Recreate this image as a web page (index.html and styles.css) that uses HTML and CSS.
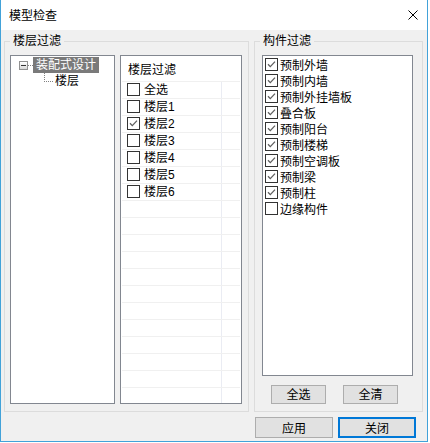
FILE: index.html
```html
<!DOCTYPE html>
<html lang="zh-CN">
<head>
    <meta charset="UTF-8">
    <title>模型检查</title>
    <link rel="stylesheet" href="styles.css">
</head>
<body>
    <div class="window">
        <div class="titlebar">
            <span class="title">模型检查</span>
            <svg class="close" width="10" height="10" viewBox="0 0 10 10">
                <path d="M0.5 0.5 L9.5 9.5 M9.5 0.5 L0.5 9.5" stroke="#000" stroke-width="1" fill="none"/>
            </svg>
        </div>

        <div class="body">
            <div class="groups">
                <fieldset class="group group-floor">
                    <legend>楼层过滤</legend>
                    <div class="group-inner">
                        <div class="tree">
                            <div class="tree-row">
                                <span class="expander"></span>
                                <span class="dots-h"></span>
                                <span class="tree-label selected">装配式设计</span>
                            </div>
                            <div class="tree-row child">
                                <span class="connector"></span>
                                <span class="tree-label">楼层</span>
                            </div>
                        </div>

                        <div class="floor-list">
                            <div class="list-header">楼层过滤</div>
                            <div class="grid-row"><div class="grid-cell"><span class="check"></span>全选</div></div>
                            <div class="grid-row"><div class="grid-cell"><span class="check"></span>楼层1</div></div>
                            <div class="grid-row"><div class="grid-cell"><span class="check"><svg width="11" height="11" viewBox="0 0 11 11"><path d="M2 5.2 L4.3 7.6 L9 2.6" fill="none" stroke="#5f5f5f" stroke-width="1.3"/></svg></span>楼层2</div></div>
                            <div class="grid-row"><div class="grid-cell"><span class="check"></span>楼层3</div></div>
                            <div class="grid-row"><div class="grid-cell"><span class="check"></span>楼层4</div></div>
                            <div class="grid-row"><div class="grid-cell"><span class="check"></span>楼层5</div></div>
                            <div class="grid-row"><div class="grid-cell"><span class="check"></span>楼层6</div></div>
                            <div class="grid-row"><div class="grid-cell"></div></div>
                            <div class="grid-row"><div class="grid-cell"></div></div>
                            <div class="grid-row"><div class="grid-cell"></div></div>
                            <div class="grid-row"><div class="grid-cell"></div></div>
                            <div class="grid-row"><div class="grid-cell"></div></div>
                            <div class="grid-row"><div class="grid-cell"></div></div>
                            <div class="grid-row"><div class="grid-cell"></div></div>
                            <div class="grid-row"><div class="grid-cell"></div></div>
                            <div class="grid-row"><div class="grid-cell"></div></div>
                            <div class="grid-row"><div class="grid-cell"></div></div>
                            <div class="grid-row"><div class="grid-cell"></div></div>
                            <div class="grid-row"><div class="grid-cell"></div></div>
                        </div>
                    </div>
                </fieldset>

                <fieldset class="group group-part">
                    <legend>构件过滤</legend>
                    <div class="group-inner column">
                        <div class="part-list">
                            <div class="part-item"><span class="check"><svg width="11" height="11" viewBox="0 0 11 11"><path d="M2 5.2 L4.3 7.6 L9 2.6" fill="none" stroke="#5f5f5f" stroke-width="1.3"/></svg></span>预制外墙</div>
                            <div class="part-item"><span class="check"><svg width="11" height="11" viewBox="0 0 11 11"><path d="M2 5.2 L4.3 7.6 L9 2.6" fill="none" stroke="#5f5f5f" stroke-width="1.3"/></svg></span>预制内墙</div>
                            <div class="part-item"><span class="check"><svg width="11" height="11" viewBox="0 0 11 11"><path d="M2 5.2 L4.3 7.6 L9 2.6" fill="none" stroke="#5f5f5f" stroke-width="1.3"/></svg></span>预制外挂墙板</div>
                            <div class="part-item"><span class="check"><svg width="11" height="11" viewBox="0 0 11 11"><path d="M2 5.2 L4.3 7.6 L9 2.6" fill="none" stroke="#5f5f5f" stroke-width="1.3"/></svg></span>叠合板</div>
                            <div class="part-item"><span class="check"><svg width="11" height="11" viewBox="0 0 11 11"><path d="M2 5.2 L4.3 7.6 L9 2.6" fill="none" stroke="#5f5f5f" stroke-width="1.3"/></svg></span>预制阳台</div>
                            <div class="part-item"><span class="check"><svg width="11" height="11" viewBox="0 0 11 11"><path d="M2 5.2 L4.3 7.6 L9 2.6" fill="none" stroke="#5f5f5f" stroke-width="1.3"/></svg></span>预制楼梯</div>
                            <div class="part-item"><span class="check"><svg width="11" height="11" viewBox="0 0 11 11"><path d="M2 5.2 L4.3 7.6 L9 2.6" fill="none" stroke="#5f5f5f" stroke-width="1.3"/></svg></span>预制空调板</div>
                            <div class="part-item"><span class="check"><svg width="11" height="11" viewBox="0 0 11 11"><path d="M2 5.2 L4.3 7.6 L9 2.6" fill="none" stroke="#5f5f5f" stroke-width="1.3"/></svg></span>预制梁</div>
                            <div class="part-item"><span class="check"><svg width="11" height="11" viewBox="0 0 11 11"><path d="M2 5.2 L4.3 7.6 L9 2.6" fill="none" stroke="#5f5f5f" stroke-width="1.3"/></svg></span>预制柱</div>
                            <div class="part-item"><span class="check"></span>边缘构件</div>
                        </div>
                        <div class="part-buttons">
                            <button class="btn btn-small">全选</button>
                            <button class="btn btn-small">全清</button>
                        </div>
                    </div>
                </fieldset>
            </div>

            <div class="footer-buttons">
                <button class="btn btn-dialog">应用</button>
                <button class="btn btn-dialog btn-default">关闭</button>
            </div>
        </div>
    </div>
</body>
</html>
```

FILE: styles.css
```css
* {
    margin: 0;
    padding: 0;
    box-sizing: border-box;
}

body {
    background: #ffffff;
    font-family: "Liberation Sans", "Noto Sans CJK SC", sans-serif;
    font-size: 12px;
    line-height: 16px;
    color: #000;
}

.window {
    width: 428px;
    height: 442px;
    border: 1px solid #42a2d9;
    border-top: none;
    display: flex;
    flex-direction: column;
}

.titlebar {
    height: 30px;
    background: #ffffff;
    display: flex;
    align-items: center;
    justify-content: space-between;
    padding: 0 9px 0 8px;
}

.title {
    font-size: 12px;
    padding-top: 2px;
}

.close {
    display: block;
}

.body {
    flex: 1;
    background: #f0f0f0;
    padding: 4px 0 0 3px;
}

.groups {
    display: flex;
    gap: 5px;
}

.group {
    border: 1px solid #dcdcdc;
    padding: 7px 6px 7px 5px;
    min-width: 0;
}

.group legend {
    padding: 0 3px;
    font-size: 12px;
    line-height: 14px;
}

.group-floor {
    width: 245px;
}

.group-part {
    width: 169px;
    padding-right: 9px;
}

.group-inner {
    height: 349px;
    display: flex;
    gap: 5px;
}

.group-inner.column {
    flex-direction: column;
    gap: 0;
}

/* tree view */
.tree {
    width: 105px;
    background: #fff;
    border: 1px solid #828790;
    padding: 1px 0 0 8px;
}

.tree-row {
    display: flex;
    align-items: center;
    height: 16px;
}

.expander {
    width: 9px;
    height: 9px;
    border: 1px solid #919191;
    background: linear-gradient(#ffffff, #d8d8d8);
    position: relative;
}

.expander::after {
    content: "";
    position: absolute;
    left: 1px;
    top: 3px;
    width: 5px;
    height: 1px;
    background: #333;
}

.dots-h {
    width: 5px;
    height: 1px;
    border-top: 1px dotted #808080;
}

.tree-label {
    padding: 0 3px;
    height: 16px;
    line-height: 16px;
}

.tree-label.selected {
    background: #7a7a7a;
    color: #fff;
}

.tree-row.child {
    align-items: flex-start;
    padding-left: 25px;
}

.connector {
    width: 9px;
    height: 9px;
    border-left: 1px dotted #808080;
    border-bottom: 1px dotted #808080;
}

.tree-row.child .tree-label {
    padding-left: 2px;
}

/* floor list */
.floor-list {
    width: 122px;
    background: #fff;
    border: 1px solid #828790;
    overflow: hidden;
}

.list-header {
    height: 25px;
    padding: 6px 0 0 7px;
}

.grid-row {
    height: 17px;
    border-top: 1px solid #f0f0f0;
    margin: 0 1px;
}

.grid-cell {
    width: 100px;
    height: 16px;
    border-right: 1px solid #eaecf3;
    display: flex;
    align-items: flex-start;
    padding-left: 5px;
    gap: 4px;
}

.check {
    width: 13px;
    height: 13px;
    border: 1px solid #333;
    background: #fff;
    display: flex;
    align-items: center;
    justify-content: center;
    flex-shrink: 0;
    margin-top: 1px;
}

.check svg {
    display: block;
}

/* part list */
.part-list {
    width: 151px;
    height: 321px;
    margin-left: 2px;
    background: #fff;
    border: 1px solid #828790;
    padding: 2px 0 0 2px;
}

.part-item {
    height: 16px;
    display: flex;
    align-items: flex-start;
    gap: 2px;
}

.part-item .check {
    margin-top: 0;
}

.part-buttons {
    display: flex;
    gap: 17px;
    margin-top: 9px;
    padding-left: 11px;
}

.btn {
    font-family: "Liberation Sans", "Noto Sans CJK SC", sans-serif;
    font-size: 12px;
    background: #e1e1e1;
    border: 1px solid #adadad;
    color: #000;
}

.btn-small {
    width: 55px;
    height: 19px;
    line-height: 16px;
}

.footer-buttons {
    display: flex;
    justify-content: flex-end;
    gap: 5px;
    margin-top: 5px;
    padding-right: 11px;
}

.btn-dialog {
    width: 78px;
    height: 21px;
}

.btn-default {
    border: 2px solid #0078d7;
}
```
